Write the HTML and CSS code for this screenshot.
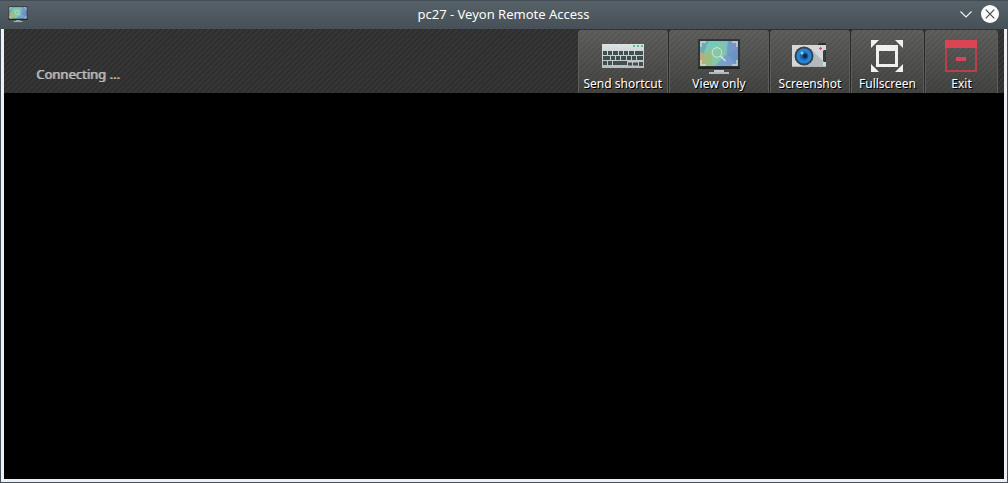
FILE: index.html
```html
<!DOCTYPE html>
<html lang="en">
<head>
<meta charset="utf-8">
<title>pc27 - Veyon Remote Access</title>
<link rel="stylesheet" href="styles.css">
</head>
<body>
<svg class="defs" width="0" height="0" aria-hidden="true">
  <defs>
    <linearGradient id="screen" x1="0" y1="0" x2="1" y2="0">
      <stop offset="0" stop-color="#9db78d"/><stop offset=".4" stop-color="#6fc5b4"/><stop offset="1" stop-color="#6b86c0"/>
    </linearGradient>
    <linearGradient id="keys" x1="0" y1="0" x2="0" y2="1">
      <stop offset="0" stop-color="#dde3e3"/><stop offset="1" stop-color="#b5bdbe"/>
    </linearGradient>
    <symbol id="monitor" viewBox="0 0 44 40">
      <path fill="#30363a" d="M1 3h42v30H1z"/>
      <path fill="url(#screen)" d="M3 5h38v25H3z"/>
      <g opacity=".7">
        <path fill="#62a5c1" d="M3 5h9l-5 13-4-2z"/>
        <path fill="#72d0c1" d="M12 5h12l-7 13-10-2z"/>
        <path fill="#c9a878" d="M3 16l7 3-1 11H3z"/>
        <path fill="#a3bf75" d="M7 18l7-5 1 17H9z"/>
        <path fill="#8fcba0" d="M14 14l11-9 5 13-12 12h-3z"/>
        <path fill="#7fcfc0" d="M24 5h7l-1 13z"/>
        <path fill="#7c96cc" d="M31 5h10v9l-11 4z"/>
        <path fill="#6a93c8" d="M41 14v16L30 18z"/>
        <path fill="#7e9ed4" d="M18 30l12-12 11 12z"/>
      </g>
      <path fill="none" stroke="#d9e5d9" stroke-opacity=".8" stroke-width="1.4" d="M4 11V6h5M35 6h5v5M40 24v5h-5M9 29H4v-5"/>
      <circle cx="20" cy="16.500" r="4.800" fill="none" stroke="#e0eeee" stroke-opacity=".8" stroke-width="1"/>
      <path stroke="#e0eeee" stroke-opacity=".9" stroke-width="1.200" d="M23.500 20l5 5"/>
      <path fill="#202528" d="M1 31h42v2H1z"/>
      <path fill="#c4cbd0" d="M17 34h10v2H17z"/>
      <path fill="#aeb8c0" d="M12 36h20v2H12z"/>
    </symbol>
  </defs>
</svg>
<div class="window">
  <header class="titlebar">
    <svg class="app-icon" viewBox="0 0 44 40" aria-hidden="true"><use href="#monitor"/></svg>
    <h1 class="title">pc27 - Veyon Remote Access</h1>
    <div class="controls">
      <button class="control" aria-label="Minimize"><svg width="18" height="18" viewBox="0 0 18 18"><path d="M3.500 6.500l5.500 5.500 5.500-5.500" fill="none" stroke="#f2f4f5" stroke-width="1.100"/></svg></button>
      <button class="control" aria-label="Close"><svg width="18" height="18" viewBox="0 0 18 18"><circle cx="9" cy="9" r="9" fill="#fcfcfc"/><path d="M4.700 4.700l8.600 8.600M13.300 4.700l-8.600 8.600" stroke="#414a51" stroke-width="1.200"/></svg></button>
    </div>
  </header>
  <div class="frame">
    <div class="toolbar">
      <p class="status">Connecting ...</p>
      <div class="tools">
        <button class="tool">
          <svg width="44" height="40" viewBox="0 0 44 40" aria-hidden="true">
            <path fill="url(#keys)" d="M1 8h42v24H1z"/>
            <path fill="#53c391" d="M32 9h2v2h-2zM36 9h2v2h-2zM40 9h2v2h-2z"/>
            <g fill="none" stroke="#40504f" stroke-width="4">
              <path d="M2 17h4M7 17h4M12 17h5M18 17h4M23 17h4M28 17h5M34 17h8"/>
              <path d="M2 22h7M10 22h4M15 22h4M20 22h5M26 22h4M31 22h4M36 22h6"/>
              <path d="M2 27h4M7 27h4M12 27h14M38 28h4"/>
              <path d="M27 28h4M32 28h5" stroke-width="3"/>
            </g>
          </svg>
          <span>Send shortcut</span>
        </button>
        <button class="tool tool-wide">
          <svg width="44" height="40" viewBox="0 0 44 40" aria-hidden="true"><use href="#monitor"/></svg>
          <span>View only</span>
        </button>
        <button class="tool tool-medium">
          <svg width="44" height="40" viewBox="0 0 44 40" aria-hidden="true">
            <path fill="#292d30" d="M30 9V8l2-1h5l1 1v1z"/>
            <path fill="#d5d8da" d="M4 9h34v22H4z"/>
            <path fill="#aeb4b8" d="M4 30h34v1H4z"/>
            <path fill="#b5b9bc" d="M23 13l12 12v5H15z"/>
            <path fill="#363b43" d="M38 14h-2l-1 1v10l1 1h2z"/>
            <circle cx="16" cy="20" r="9.500" fill="#384551"/>
            <circle cx="16" cy="20" r="7.500" fill="#2587d9"/>
            <circle cx="16" cy="20" r="4.500" fill="#1d67b3"/>
            <circle cx="17" cy="20" r="2.500" fill="#122c4a"/>
            <circle cx="14" cy="17" r="1.500" fill="#8fccf3"/>
            <path stroke="#ef3b68" stroke-width="1.200" d="M31 12.500h3M32.500 11v3"/>
          </svg>
          <span>Screenshot</span>
        </button>
        <button class="tool tool-small">
          <svg width="33" height="40" viewBox="0 0 33 40" aria-hidden="true">
            <path fill="#f0f0f0" d="M0 4h8l-8 8zM24 4h8v8zM0 28l8 8H0zM32 28v8h-8z"/>
            <path fill="#f0f0f0" fill-rule="evenodd" d="M5 9h22v22H5zM8 15v13h16V15z"/>
          </svg>
          <span>Fullscreen</span>
        </button>
        <button class="tool tool-small">
          <svg width="33" height="40" viewBox="0 0 33 40" aria-hidden="true">
            <path fill="#da4453" d="M0 4h32v8H0zM11 21h10v4H11z"/>
            <path fill="none" stroke="#b93f4b" stroke-width="2" d="M1 12v23h30V12"/>
          </svg>
          <span>Exit</span>
        </button>
      </div>
    </div>
    <main class="remote" aria-label="Remote screen"></main>
  </div>
</div>
</body>
</html>
```
FILE: styles.css
```css
* { box-sizing: border-box; }
body { margin: 0; font-family: "Noto Sans", sans-serif; }
.defs { position: absolute; }
.window {
  display: flex;
  flex-direction: column;
  min-height: 100vh;
  background: #475057;
}
.titlebar {
  display: grid;
  grid-template-columns: 1fr auto 1fr;
  align-items: center;
  height: 29px;
  padding: 0 9px 1px 8px;
  background: linear-gradient(#434d55 1px, #566168 1px, #475057);
}
.app-icon { width: 20px; height: 18px; }
.title { margin: 0; font-size: 13px; font-weight: 400; line-height: 18px; color: #fcfcfc; }
.controls { display: flex; justify-content: flex-end; gap: 6px; }
.control { padding: 0; border: 0; background: none; }
.control svg { display: block; }
.frame {
  display: flex;
  flex: 1;
  flex-direction: column;
  margin: 0 1px 1px;
  padding: 0 3px 3px;
  background: #eff0f5;
}
.toolbar {
  display: flex;
  justify-content: space-between;
  height: 64px;
  padding: 1px 6px 0 32px;
  background: repeating-linear-gradient(135deg, #353535 0 2px, #292929 3px, #353535 4px);
}
.status {
  align-self: flex-end;
  margin: 0 0 10px;
  font-size: 13px;
  line-height: 18px;
  color: #bcbcbc;
  text-shadow: 1px 0 0 #a0a0a0;
}
.tools { display: flex; gap: 1px; background: #292929; border-radius: 3px 3px 0 0; }
.tool {
  display: flex;
  flex-direction: column;
  align-items: center;
  min-width: 90px;
  padding: 5px 5px 0;
  border: 1px solid #5c5c5a;
  border-width: 1px 1px 0;
  border-radius: 3px 3px 0 0;
  background:
    repeating-linear-gradient(135deg, transparent 0 2px, #00000020 3px, transparent 4px),
    linear-gradient(#5f5f5d, #434341);
  color: #fff;
  font-family: inherit;
  font-size: 12px;
  line-height: 16px;
  text-shadow: 1px 1px 0 #000;
  white-space: nowrap;
}
.tool svg { flex: none; }
.tool-wide { min-width: 100px; }
.tool-medium { min-width: 80px; }
.tool-small { min-width: 73px; }
.remote { flex: 1; background: #000; }
```
